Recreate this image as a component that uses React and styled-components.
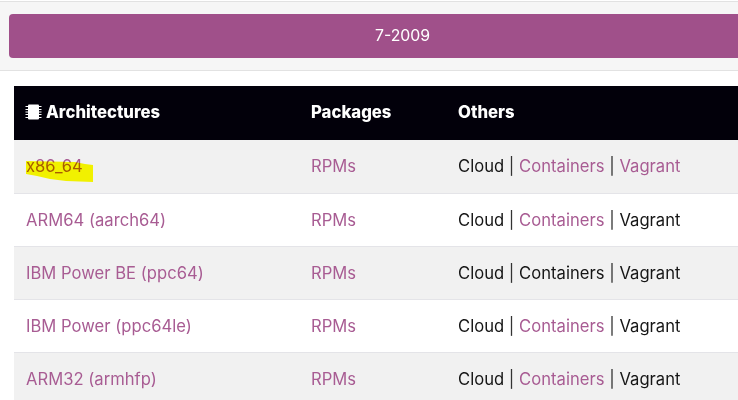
import React from "react";
import styled, { createGlobalStyle } from "styled-components";

const GlobalStyle = createGlobalStyle`
  html, body {
    margin: 0;
    padding: 0;
    background: #fff;
    overflow: hidden;
  }
  body {
    font-family: "Inter", "Liberation Sans", sans-serif;
    color: #151515;
  }
`;

const Page = styled.div`
  width: 738px;
  height: 400px;
  overflow: hidden;
`;

const Band = styled.div`
  margin-top: 1px;
  height: 68px;
  padding: 0 0 0 9px;
  background: #f6f6f6;
  border-top: 1px solid #e2e2e2;
  border-bottom: 1px solid #e2e2e2;
  display: flex;
  align-items: center;
`;

const VersionButton = styled.div`
  width: 760px;
  flex: none;
  height: 44px;
  margin-top: -1px;
  background: #a0508a;
  border-radius: 4px 0 0 4px;
  color: #fff;
  font-size: 15.8px;
  display: flex;
  align-items: center;
  padding-left: 366px;
  box-sizing: border-box;
`;

const TableWrap = styled.div`
  margin: 15px 0 0 14px;
`;

const Table = styled.table`
  width: 760px;
  table-layout: fixed;
  border-collapse: collapse;
  font-size: 16.6px;
  letter-spacing: 0.02px;
`;

const HeadRow = styled.tr`
  height: 54px;
  background: #02000a;
`;

const HeadCell = styled.th`
  box-sizing: border-box;
  padding: 0 12px 2px;
  color: #fff;
  font-weight: 800;
  font-size: 16.7px;
  text-align: left;
  width: ${(p) => p.$w || "auto"};
`;

const Row = styled.tr`
  height: 53px;
  background: ${(p) => (p.$odd ? "#f1f1f1" : "#fff")};
  border-bottom: 1px solid #e4e4e8;
`;

const Cell = styled.td`
  box-sizing: border-box;
  padding: 0 12px;
  color: #151515;
`;

const Link = styled.span`
  color: #a85c93;
`;

const Sep = styled.span`
  color: #333;
`;

const Marked = styled.span`
  position: relative;
  display: inline-block;
`;

const Marker = styled.svg`
  position: absolute;
  left: -1px;
  top: -1px;
  mix-blend-mode: multiply;
  pointer-events: none;
`;

const Chip = styled.svg`
  vertical-align: -2px;
  margin: 0 4px 0 -1px;
`;

const ChipIcon = () => (
  <Chip width="17" height="16" viewBox="0 0 17 16">
    <rect x="3" y="0.5" width="11" height="15" rx="1" fill="#fff" />
    <path
      d="M0.5 2.5h2.5M0.5 5.5h2.5M0.5 8h2.5M0.5 10.5h2.5M0.5 13.5h2.5M14 2.5h2.5M14 5.5h2.5M14 8h2.5M14 10.5h2.5M14 13.5h2.5"
      stroke="#fff"
      strokeWidth="1"
    />
  </Chip>
);

const rows = [
  { name: "x86_64", marked: true, containers: true, vagrant: true },
  { name: "ARM64 (aarch64)", containers: true },
  { name: "IBM Power BE (ppc64)" },
  { name: "IBM Power (ppc64le)", containers: true },
  { name: "ARM32 (armhfp)", containers: true },
];

export default function App() {
  return (
    <Page>
      <GlobalStyle />
      <Band>
        <VersionButton>7-2009</VersionButton>
      </Band>
      <TableWrap>
        <Table>
          <thead>
            <HeadRow>
              <HeadCell $w="285px">
                <ChipIcon />
                Architectures
              </HeadCell>
              <HeadCell $w="147px">Packages</HeadCell>
              <HeadCell>Others</HeadCell>
            </HeadRow>
          </thead>
          <tbody>
            {rows.map((r, i) => (
              <Row key={r.name} $odd={i % 2 === 0}>
                <Cell>
                  {r.marked ? (
                    <Marked>
                      <Link>{r.name}</Link>
                      <Marker width="72" height="30" viewBox="0 0 72 30">
                        <path d="M1 6 L50 7 L60 9 L68 10 L68 27 L41 26 L25 24 L12 21 L1 19 Z" fill="#ffff00" />
                      </Marker>
                    </Marked>
                  ) : (
                    <Link>{r.name}</Link>
                  )}
                </Cell>
                <Cell>
                  <Link>RPMs</Link>
                </Cell>
                <Cell>
                  Cloud <Sep>|</Sep> {r.containers ? <Link>Containers</Link> : "Containers"} <Sep>|</Sep>{" "}
                  {r.vagrant ? <Link>Vagrant</Link> : "Vagrant"}
                </Cell>
              </Row>
            ))}
          </tbody>
        </Table>
      </TableWrap>
    </Page>
  );
}
